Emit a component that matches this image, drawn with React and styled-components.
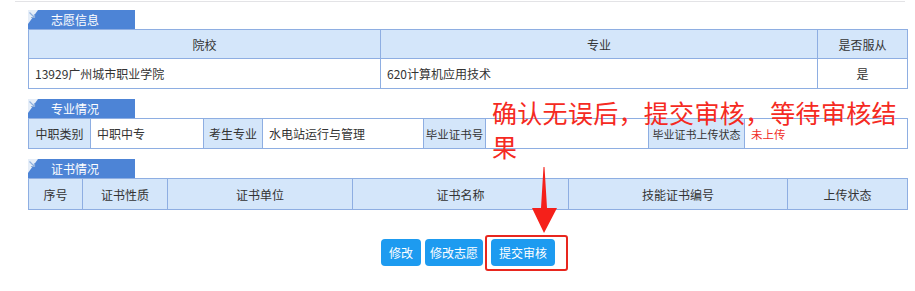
import React from 'react'
import styled, { createGlobalStyle } from 'styled-components'

const GlobalStyle = createGlobalStyle`
  html, body {
    margin: 0;
    padding: 0;
    background: #fff;
  }
  body {
    font-family: "Noto Sans CJK SC", "Noto Sans", sans-serif;
    color: #333;
  }
`

const Page = styled.div`
  position: relative;
  width: 915px;
  height: 291px;
  overflow: hidden;
`

const TopRule = styled.div`
  height: 1px;
  margin: 1px 10px 0 15px;
  background: #e3e3e6;
`

const Content = styled.div`
  width: 879px;
  margin-left: 28px;
  display: flex;
  flex-direction: column;
`

const Section = styled.div`
  margin-top: ${({first}) => first ? '8px' : '10px'};
`

const Tab = styled.div`
  display: flex;
  width: 107px;
  height: 19px;
`

const TabLabel = styled.div`
  flex: 1;
  background: #4d84d6;
  color: #fff;
  font-size: 12px;
  line-height: 19px;
  padding-left: 9px;
`

const Table = styled.table`
  width: 100%;
  table-layout: fixed;
  border-collapse: collapse;
  border: 1px solid #7ea3dc;
  font-size: 12px;
`

const Cell = styled.td`
  height: ${({h}) => h || 29}px;
  padding: 0 ${({tight}) => tight ? 0 : 6}px;
  border: 1px solid #8eaee2;
  background: ${({head}) => head ? '#d4e6fa' : '#fff'};
  text-align: ${({center}) => center ? 'center' : 'left'};
  color: ${({warn}) => warn ? '#f0302a' : '#333'};
  white-space: nowrap;
  overflow: hidden;
  font-size: ${({size}) => size || 12}px;
  box-sizing: border-box;
`

const ButtonRow = styled.div`
  display: flex;
  justify-content: center;
  margin-top: 29px;
  padding-left: 1px;
`

const Button = styled.button`
  width: ${({w}) => w}px;
  height: 27px;
  margin-left: ${({gap}) => gap || 0}px;
  border: none;
  border-radius: 4px;
  background: #1d9bf0;
  color: #fff;
  font-family: inherit;
  font-size: 12px;
  padding: 0;
`

const Note = styled.div`
  position: absolute;
  left: 492px;
  top: 95px;
  width: 415px;
  font-size: 25px;
  font-weight: 400;
  line-height: 34px;
  color: #f52a22;
  letter-spacing: 0.3px;
`

const Highlight = styled.div`
  position: absolute;
  left: 485px;
  top: 235px;
  width: 83px;
  height: 36px;
  box-sizing: border-box;
  border: 2px solid #e8261e;
  border-radius: 3px;
`

const Arrow = styled.svg`
  position: absolute;
  left: 531px;
  top: 165px;
`

function TabCorner() {
  return (
    <svg width="14" height="19" viewBox="0 0 14 19">
      <rect width="14" height="19" fill="#e6eef8" />
      <polygon points="10,0 14,0 14,19 0,19 0,14" fill="#4d84d6" />
      <path d="M1.5 2.5 L6.5 7.5 M6.5 4 L6.5 7.5 L3 7.5" stroke="#8fb0de" strokeWidth="1.2" fill="none" />
    </svg>
  )
}

function Header({ title }) {
  return (
    <Tab>
      <TabCorner />
      <TabLabel>{title}</TabLabel>
    </Tab>
  )
}

const certCols = [54, 85, 185, 216, 219, 120]
const certHeads = ['序号', '证书性质', '证书单位', '证书名称', '技能证书编号', '上传状态']

export default function App() {
  return (
    <Page>
      <GlobalStyle />
      <TopRule />
      <Content>
        <Section first>
          <Header title="志愿信息" />
          <Table>
            <colgroup>
              <col style={{ width: 352 }} />
              <col style={{ width: 437 }} />
              <col style={{ width: 90 }} />
            </colgroup>
            <tbody>
              <tr>
                <Cell head center>院校</Cell>
                <Cell head center>专业</Cell>
                <Cell head center>是否服从</Cell>
              </tr>
              <tr>
                <Cell h={30}>13929广州城市职业学院</Cell>
                <Cell h={30}>620计算机应用技术</Cell>
                <Cell h={30} center>是</Cell>
              </tr>
            </tbody>
          </Table>
        </Section>

        <Section>
          <Header title="专业情况" />
          <Table>
            <colgroup>
              {[62, 113, 59, 161, 62, 163, 96, 163].map((w, i) => (
                <col key={i} style={{ width: w }} />
              ))}
            </colgroup>
            <tbody>
              <tr>
                <Cell h={30} head center tight>中职类别</Cell>
                <Cell h={30}>中职中专</Cell>
                <Cell h={30} head center tight>考生专业</Cell>
                <Cell h={30}>水电站运行与管理</Cell>
                <Cell h={30} head center tight size={11.5}>毕业证书号</Cell>
                <Cell h={30}></Cell>
                <Cell h={30} head center tight size={11}>毕业证书上传状态</Cell>
                <Cell h={30} warn size={11.5}>未上传</Cell>
              </tr>
            </tbody>
          </Table>
        </Section>

        <Section>
          <Header title="证书情况" />
          <Table>
            <colgroup>
              {certCols.map((w, i) => <col key={i} style={{ width: w }} />)}
            </colgroup>
            <tbody>
              <tr>
                {certHeads.map(h => <Cell key={h} h={31} head center>{h}</Cell>)}
              </tr>
            </tbody>
          </Table>
        </Section>

        <ButtonRow>
          <Button w={40}>修改</Button>
          <Button w={58} gap={4}>修改志愿</Button>
          <Button w={64} gap={8}>提交审核</Button>
        </ButtonRow>
      </Content>

      <Note>确认无误后，提交审核，等待审核结果</Note>
      <Arrow width="28" height="70" viewBox="0 0 28 70">
        <polygon points="12.5,2 13.5,2 16,43 26,43 13,68 1,43 10,43" fill="#f5201a" />
      </Arrow>
      <Highlight />
    </Page>
  )
}
